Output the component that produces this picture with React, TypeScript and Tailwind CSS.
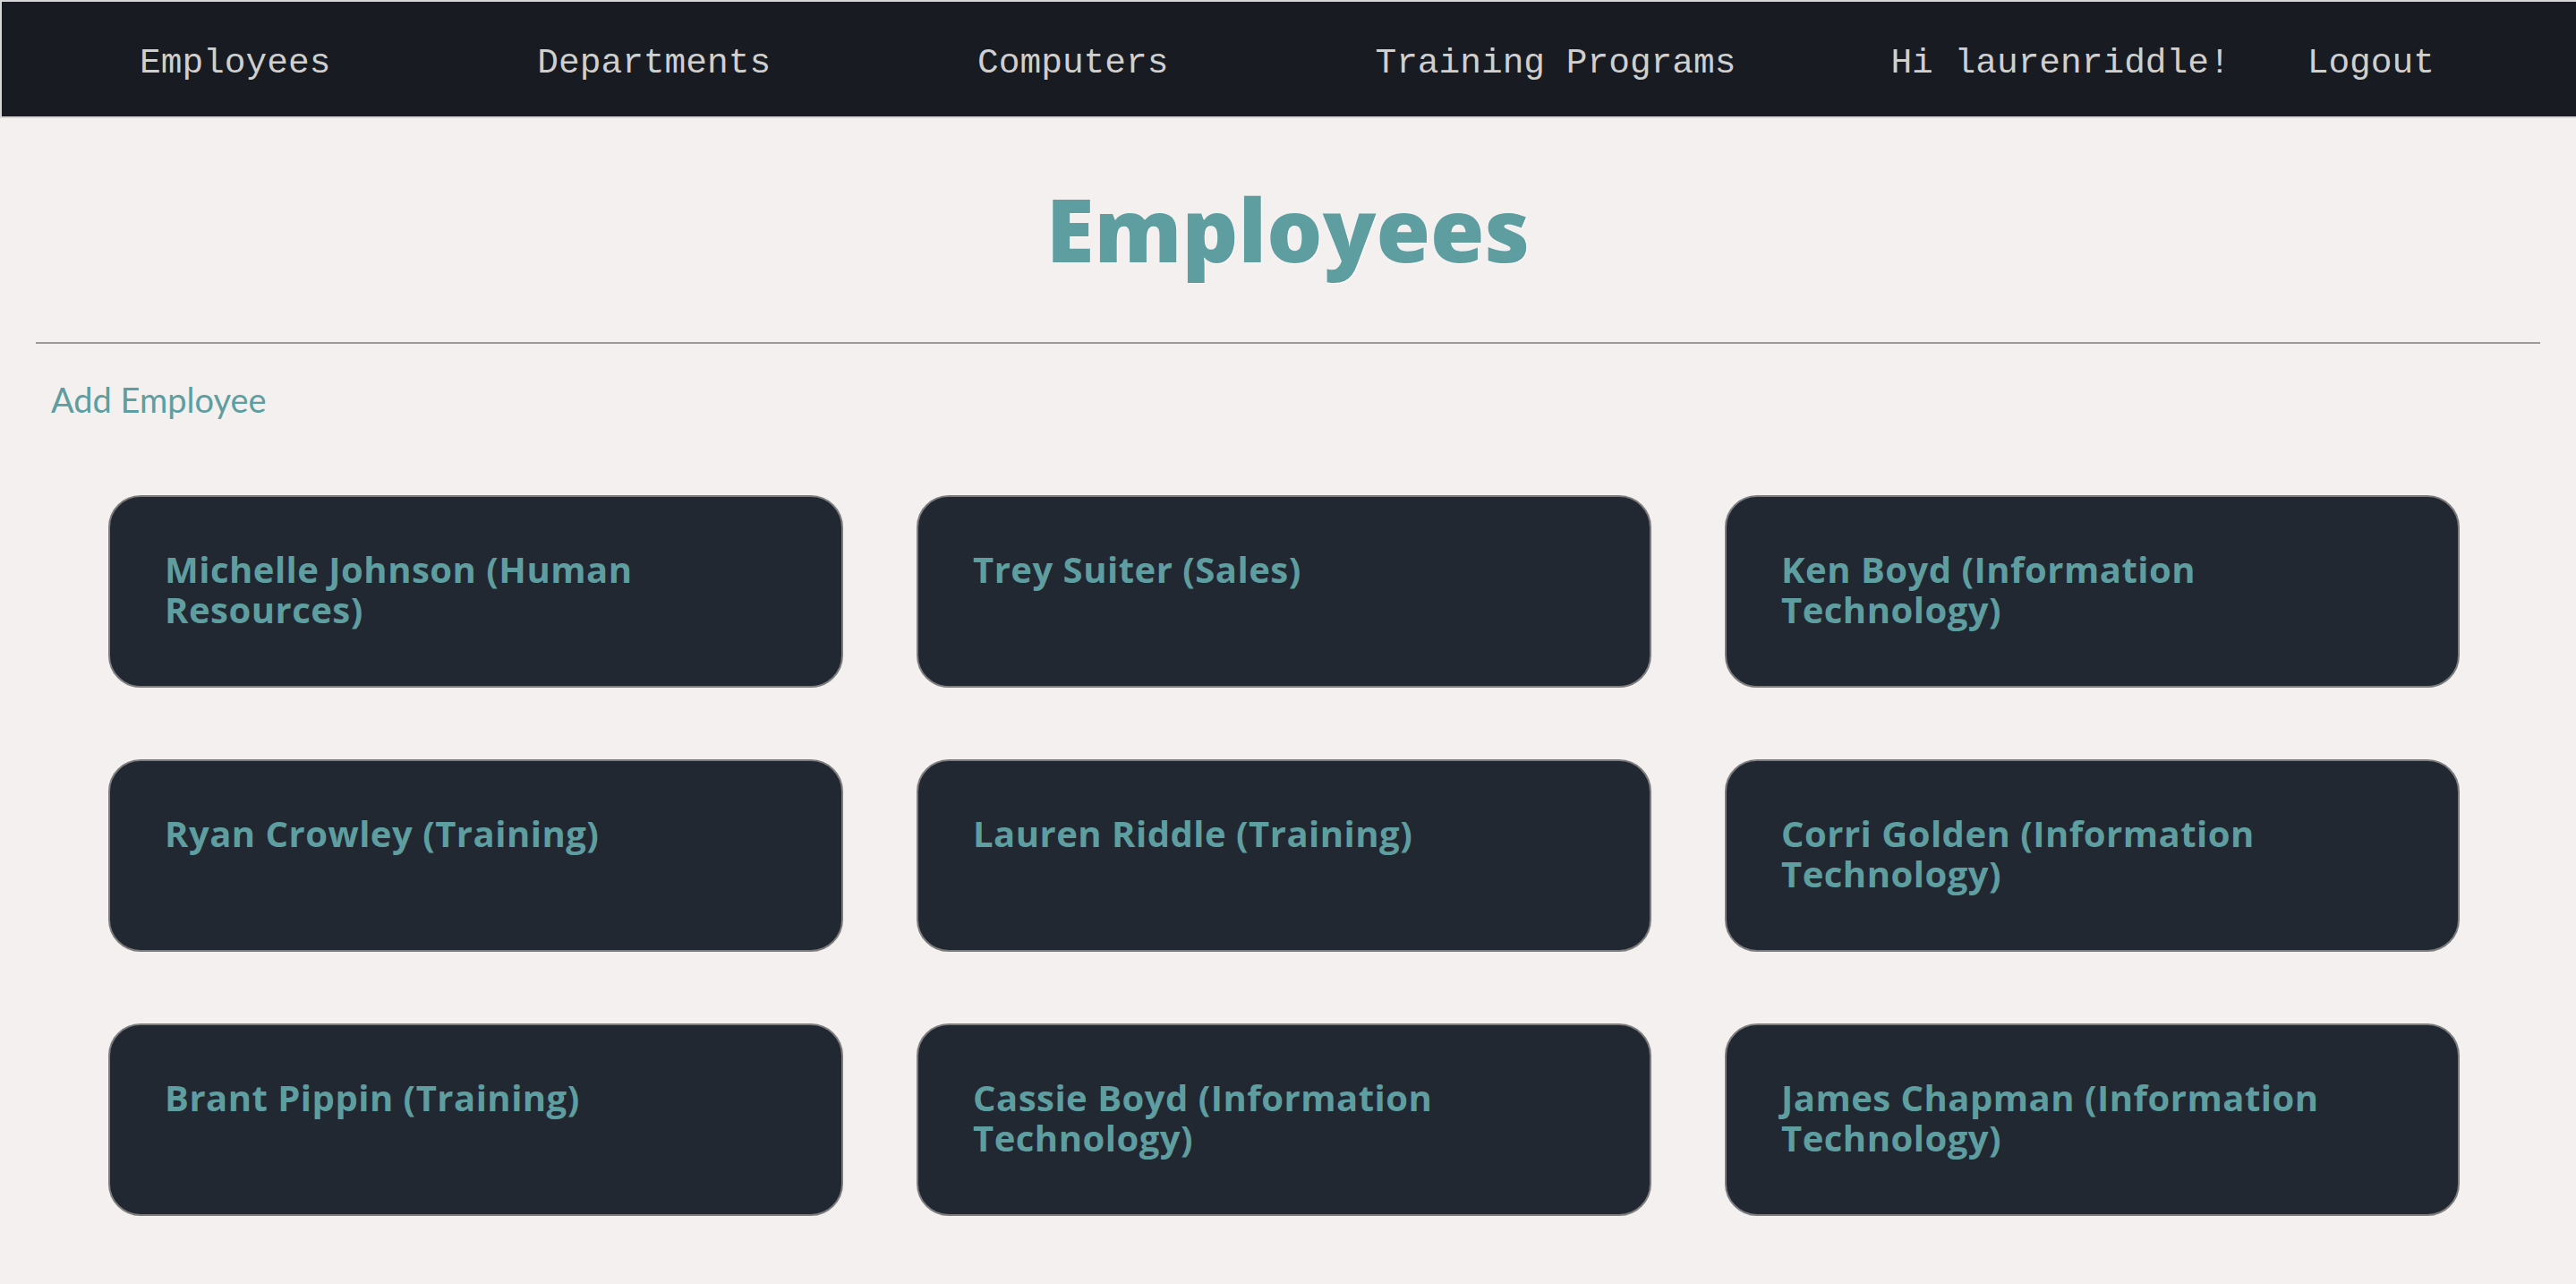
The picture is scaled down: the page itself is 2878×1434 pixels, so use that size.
const employees = [
  { id: 1, name: 'Michelle Johnson', department: 'Human Resources' },
  { id: 2, name: 'Trey Suiter', department: 'Sales' },
  { id: 3, name: 'Ken Boyd', department: 'Information Technology' },
  { id: 4, name: 'Ryan Crowley', department: 'Training' },
  { id: 5, name: 'Lauren Riddle', department: 'Training' },
  { id: 6, name: 'Corri Golden', department: 'Information Technology' },
  { id: 7, name: 'Brant Pippin', department: 'Training' },
  { id: 8, name: 'Cassie Boyd', department: 'Information Technology' },
  { id: 9, name: 'James Chapman', department: 'Information Technology' },
];

function NavBar() {
  return (
    <nav className="flex h-[132px] items-center border-t-2 border-b-2 border-l-2 border-[#d6d6d6] bg-[#181b22] pt-[10px] font-['Liberation_Mono',monospace] text-[39.5px] text-[#cfcfcf]">
      <ul className="flex items-center pl-[154px]">
        <li>Employees</li>
        <li className="ml-[231px]">Departments</li>
        <li className="ml-[231px]">Computers</li>
        <li className="ml-[231px]">Training Programs</li>
        <li className="ml-[173px]">Hi laurenriddle!</li>
        <li className="ml-[86px]">Logout</li>
      </ul>
    </nav>
  );
}

function EmployeeCard({ name, department }: { name: string; department: string }) {
  return (
    <div className="h-[215px] rounded-[36px] border-2 border-[#7d7d7d] bg-[#222831] px-[61px] pt-[58px]">
      <p className="max-w-[640px] font-['Open_Sans',sans-serif] text-[40px] font-bold leading-[45px] tracking-[0.5px] text-[#5f9ea0]">
        {name} ({department})
      </p>
    </div>
  );
}

export default function App() {
  return (
    <div className="min-h-[1434px] bg-[#f4f0ef] font-['Lato',sans-serif]">
      <NavBar />
      <h1 className="mt-[74px] text-center font-['Open_Sans',sans-serif] text-[98px] font-extrabold leading-none text-[#5f9ea0] [text-shadow:1px_1px_0_#ffffff]">
        Employees
      </h1>
      <hr className="mx-[40px] mt-[78px] border-0 h-[2px] bg-[#9a9a9a]" />
      <a className="ml-[57px] mt-[43px] block text-[38px] leading-none text-[#5f9ea0]" href="#">
        Add Employee
      </a>
      <div className="mt-[88px] grid grid-cols-[821px_821px_821px] gap-x-[82px] gap-y-[80px] pl-[121px] pb-[40px]">
        {employees.map((e) => (
          <EmployeeCard key={e.id} name={e.name} department={e.department} />
        ))}
      </div>
    </div>
  );
}
